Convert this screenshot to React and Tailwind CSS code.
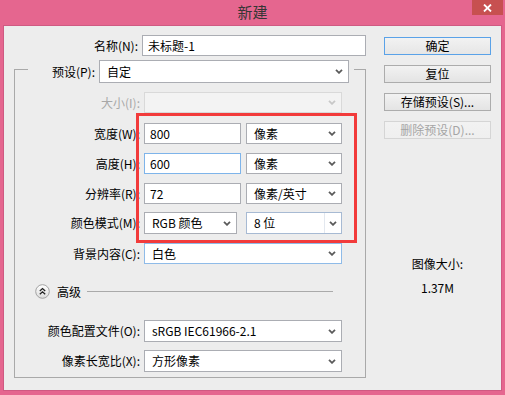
import React from 'react'

function Chevron({ light }) {
  return (
    <svg width="8" height="5" viewBox="0 0 8 5" className="shrink-0">
      <path d="M1 0.8 L4 3.8 L7 0.8" fill="none" stroke={light ? '#c8c8c8' : '#5a5a5a'} strokeWidth="1.8" />
    </svg>
  )
}

function Select({ value, className = '', disabled, split }) {
  return (
    <div
      className={`flex items-center shrink-0 border pl-[7px] ${
        disabled ? 'bg-[#f3f3f3] border-[#d9d9d9]' : 'bg-white'
      } ${className}`}
    >
      <span className="flex-1 whitespace-nowrap leading-[16px]">{value}</span>
      {split && <span className="self-stretch w-px bg-[#e3e8ef] mr-[4px]" />}
      <span className={split ? 'pr-[4px]' : 'pr-[5px]'}>
        <Chevron light={disabled} />
      </span>
    </div>
  )
}

function Input({ value, className = '' }) {
  return (
    <div className={`flex items-center shrink-0 bg-white border pl-[5px] ${className}`}>
      <span className="whitespace-nowrap leading-[16px]">{value}</span>
    </div>
  )
}

function Label({ children, muted }) {
  return (
    <span className={`w-[125px] shrink-0 text-right leading-[16px] ${muted ? 'text-[#a8a8a8]' : 'text-black'}`}>
      {children}
    </span>
  )
}

function Button({ children, primary, disabled }) {
  return (
    <div
      className={`h-[18px] flex items-center justify-center border bg-gradient-to-b leading-[16px] ${
        primary
          ? 'border-[#5aa2e8] from-[#f2f2f2] to-[#e6e6e6] text-black'
          : disabled
          ? 'border-[#d5d5d5] from-[#f2f2f2] to-[#efefef] text-[#a5a5a5]'
          : 'border-[#acacac] from-[#f2f2f2] to-[#e4e4e4] text-black'
      }`}
    >
      {children}
    </div>
  )
}

export default function App() {
  return (
    <div className="w-[505px] h-[395px] bg-[#e5668f] flex flex-col font-['Noto_Sans_CJK_SC',sans-serif] text-[12px] text-black overflow-hidden">
      {/* title bar */}
      <div className="h-[25px] flex items-start shrink-0">
        <div className="w-[33px]" />
        <div className="flex-1 h-[24px] flex items-center justify-center text-[15px] text-[#363636] leading-[18px]">新建</div>
        <div className="w-[31px] h-[15px] mr-[2px] bg-[#c75050] flex items-center justify-center">
          <svg width="9" height="8" viewBox="0 0 9 8">
            <path d="M1 0.5 L8 7.5 M8 0.5 L1 7.5" stroke="#fff" strokeWidth="1.8" />
          </svg>
        </div>
      </div>

      {/* client area */}
      <div className="relative mx-[3px] h-[366px] bg-[#ededed] border border-[#cf5a82] flex">
        <div className="w-[362px] shrink-0 flex flex-col">
          <div className="mt-[9px] flex items-center h-[21px]">
            <span className="w-[136px] text-right leading-[16px]">名称(N):</span>
            <Input value="未标题-1" className="ml-[4px] w-[224px] h-[21px] border-[#abadb3]" />
          </div>

          <fieldset className="ml-[10px] w-[352px] border border-[#a9a9a9] pb-[5px]">
            <legend className="ml-[13px] pt-[4px] pr-[5px]">
              <div className="flex items-center">
                <span className="w-[67px] text-right leading-[16px]">预设(P):</span>
                <Select value="自定" className="ml-[4px] w-[250px] h-[23px] border-[#abadb3]" />
              </div>
            </legend>

            <div className="mt-[9px] flex items-center h-[21px]">
              <Label muted>大小(I):</Label>
              <Select value="" disabled className="ml-[4px] w-[198px] h-[21px]" />
            </div>

            <div className="mt-[10px] flex items-center h-[21px]">
              <Label>宽度(W):</Label>
              <Input value="800" className="ml-[4px] w-[97px] h-[21px] border-[#abadb3]" />
              <Select value="像素" className="ml-[5px] w-[96px] h-[21px] border-[#abadb3]" />
            </div>

            <div className="mt-[9px] flex items-center h-[21px]">
              <Label>高度(H):</Label>
              <Input value="600" className="ml-[4px] w-[97px] h-[21px] border-[#7eb4ea]" />
              <Select value="像素" className="ml-[5px] w-[96px] h-[21px] border-[#abadb3]" />
            </div>

            <div className="mt-[9px] flex items-center h-[21px]">
              <Label>分辨率(R):</Label>
              <Input value="72" className="ml-[4px] w-[97px] h-[21px] border-[#abadb3]" />
              <Select value="像素/英寸" className="ml-[5px] w-[96px] h-[21px] border-[#abadb3]" />
            </div>

            <div className="mt-[8px] flex items-center h-[22px]">
              <Label>颜色模式(M):</Label>
              <Select value="RGB 颜色" className="ml-[4px] w-[93px] h-[22px] border-[#abadb3]" />
              <Select value="8 位" split className="ml-[9px] w-[96px] h-[22px] border-[#a7bad3]" />
            </div>

            <div className="mt-[9px] flex items-center h-[21px]">
              <Label>背景内容(C):</Label>
              <Select value="白色" className="ml-[4px] w-[198px] h-[21px] border-[#8fbbe8]" />
            </div>

            <div className="mt-[20px] flex items-center h-[15px] pl-[20px] pr-[32px]">
              <svg width="15" height="15" viewBox="0 0 15 15" className="shrink-0">
                <defs>
                  <linearGradient id="adv" x1="0" y1="0" x2="0" y2="1">
                    <stop offset="0" stopColor="#ffffff" />
                    <stop offset="1" stopColor="#dcdcdc" />
                  </linearGradient>
                </defs>
                <circle cx="7.5" cy="7.5" r="6.8" fill="url(#adv)" stroke="#9a9a9a" strokeWidth="0.9" />
                <path d="M4.8 7 L7.5 4.6 L10.2 7 M4.8 10.2 L7.5 7.8 L10.2 10.2" fill="none" stroke="#222" strokeWidth="1.3" />
              </svg>
              <span className="ml-[7px] leading-[16px]">高级</span>
              <span className="ml-[6px] flex-1 h-px bg-[#aaaaaa]" />
            </div>

            <div className="mt-[21px] flex items-center h-[22px]">
              <Label>颜色配置文件(O):</Label>
              <Select value="sRGB IEC61966-2.1" className="ml-[4px] w-[198px] h-[22px] border-[#abadb3]" />
            </div>

            <div className="mt-[8px] flex items-center h-[22px]">
              <Label>像素长宽比(X):</Label>
              <Select value="方形像素" className="ml-[4px] w-[198px] h-[22px] border-[#abadb3]" />
            </div>
          </fieldset>
        </div>

        <div className="ml-[18px] w-[107px] shrink-0 flex flex-col">
          <div className="mt-[11px] flex flex-col gap-[10px]">
            <Button primary>确定</Button>
            <Button>复位</Button>
            <Button>存储预设(S)...</Button>
            <Button disabled>删除预设(D)...</Button>
          </div>
          <div className="mt-[117px] text-center leading-[16px]">图像大小:</div>
          <div className="mt-[8px] text-center leading-[16px]">1.37M</div>
        </div>

        {/* red annotation box */}
        <div className="absolute left-[132px] top-[87px] w-[221px] h-[130px] border-[3px] border-[#f23b3b] pointer-events-none" />
      </div>
    </div>
  )
}
